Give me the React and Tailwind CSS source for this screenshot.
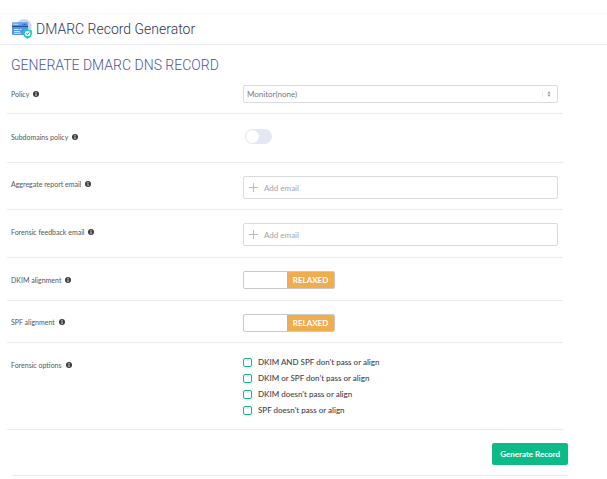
import { useState } from 'react';

const FORENSIC_OPTIONS = [
  { id: 'dkim-and-spf', label: "DKIM AND SPF don't pass or align" },
  { id: 'dkim-or-spf', label: "DKIM or SPF don't pass or align" },
  { id: 'dkim', label: "DKIM doesn't pass or align" },
  { id: 'spf', label: "SPF doesn't pass or align" },
];

const RecordIcon = () => (
  <svg className="w-5 h-5 shrink-0" viewBox="0 0 20 20" aria-hidden="true">
    <circle cx="12" cy="7.6" r="7.6" fill="#ccd5e8" />
    <rect x="0" y="3.6" width="16" height="12.4" rx="1" fill="#4f98f0" />
    <path d="M0 6.8V4.6a1 1 0 0 1 1-1h14a1 1 0 0 1 1 1v2.2z" fill="#62a5f5" />
    <rect x="0" y="6.8" width="16" height="1.2" fill="#234f91" />
    <path d="M1.5 5.3h5" stroke="#d8e9ff" strokeWidth=".8" />
    <path d="M10.5 5.3h4" stroke="#234f91" strokeWidth="1" strokeDasharray="1 .5" />
    <path d="M2 10.5h4.5M7.5 10.5h2M2 12.5h6M2 14.3h7" stroke="#e3efff" strokeWidth=".9" />
    <path d="M15.6 9.8c1.2 1 2.7 1.5 4.3 1.5v3.5c0 2.4-1.8 3.9-4.3 5-2.5-1.1-4.3-2.6-4.3-5v-3.5c1.6 0 3.1-.5 4.3-1.5z" fill="#0acdb8" />
    <circle cx="15.6" cy="14.5" r="2.8" fill="#fff" />
    <path d="M14.3 14.5l1 1 1.8-2" fill="none" stroke="#354460" strokeWidth=".9" />
  </svg>
);

const InfoIcon = () => (
  <svg className="w-1.5 h-1.5 shrink-0" viewBox="0 0 12 12" aria-hidden="true">
    <circle cx="6" cy="6" r="6" fill="#3c3c3c" />
    <path d="M5 2.2h2v1.6H5zM4.4 5H7v3.4h.7v1.2H4.4V8.4H5V6.2h-.6z" fill="#ddd" />
  </svg>
);

const Row = ({ label, htmlFor, className, labelClassName = 'pt-px', children }) => (
  <div className={`grid grid-cols-[232px_1fr] border-b border-[#e9eaf0] ${className}`}>
    <div className={`flex items-start px-1 ${labelClassName}`}>
      <div className="flex items-center gap-1">
        <label htmlFor={htmlFor} id={`${htmlFor}-label`} className="text-[7px] leading-4 text-[#555]">
          {label}
        </label>
        <InfoIcon />
      </div>
    </div>
    <div className="pl-1 pr-[5px]">{children}</div>
  </div>
);

const EmailInput = ({ id }) => (
  <div className="flex items-center gap-1.5 h-[23px] px-[5px] border border-[#d9dadd] rounded-xs">
    <svg className="w-[9px] h-[9px] shrink-0" viewBox="0 0 9 9" aria-hidden="true">
      <path d="M4.5 0v9M0 4.5h9" stroke="#bcbcbc" strokeWidth="1" />
    </svg>
    <input
      id={id}
      type="email"
      placeholder="Add email"
      className="w-full text-[8px] leading-4 text-[#555] placeholder:text-[#a5a5a5] outline-none"
    />
  </div>
);

const AlignmentSwitch = ({ id }) => {
  const [relaxed, setRelaxed] = useState(true);
  return (
    <button
      id={id}
      type="button"
      role="switch"
      aria-checked={relaxed}
      aria-labelledby={`${id}-label`}
      onClick={() => setRelaxed(!relaxed)}
      className={`flex w-[92px] h-[18px] border border-[#c9c9c9] rounded-xs overflow-hidden ${relaxed ? 'justify-end' : 'justify-start'}`}
    >
      <span className="w-[47px] h-4 bg-[#f0ad4e] text-white text-[8px] leading-4 font-bold text-center">
        {relaxed ? 'RELAXED' : 'STRICT'}
      </span>
    </button>
  );
};

const App = () => {
  return (
    <div className="bg-white font-[Lato,sans-serif] pt-[13px]">
      <header className="flex items-center gap-1 h-8 pl-3 border-t border-b border-t-[#f8f8fa] border-b-[#e9eaf0]">
        <RecordIcon />
        <h1 className="font-[Roboto,sans-serif] text-[14px] leading-5 font-light text-[#35354f]">DMARC Record Generator</h1>
      </header>

      <form onSubmit={(e) => e.preventDefault()}>
        <h2 className="pt-2.5 pl-[11px] font-[Roboto,sans-serif] text-[14px] leading-5 font-light text-[#4a5796]">
          GENERATE DMARC DNS RECORD
        </h2>

        <div className="ml-[7px] mr-11">
          <Row label="Policy" htmlFor="policy" className="pt-2.5 pb-2.5">
            <div className="relative flex items-center">
              <select
                id="policy"
                className="appearance-none w-full h-[18px] px-[3px] border border-[#d9dadd] rounded-xs bg-white text-[8px] leading-4 text-[#777]"
              >
                <option>Monitor(none)</option>
                <option>Quarantine</option>
                <option>Reject</option>
              </select>
              <svg className="absolute right-1.5 w-2.5 h-2 pointer-events-none" viewBox="0 0 10 8" aria-hidden="true">
                <path d="M.5 1v6" stroke="#eeeeee" />
                <path d="M5.5 3.5L7 1l1.5 2.5zM5.5 4.5L7 7l1.5-2.5z" fill="#999" />
              </svg>
            </div>
          </Row>

          <Row label="Subdomains policy" htmlFor="subdomains" className="pt-[15px] pb-[17px]" labelClassName="pt-0">
            <input
              id="subdomains"
              type="checkbox"
              role="switch"
              className="appearance-none block ml-0.5 w-[27px] h-[15px] p-px rounded-full bg-[#e4e8f1] checked:bg-[#0cbb87] before:block before:w-[13px] before:h-[13px] before:rounded-full before:bg-white checked:before:ml-3"
            />
          </Row>

          <Row label="Aggregate report email" htmlFor="aggregate" className="pt-[13px] pb-2.5" labelClassName="pt-0">
            <EmailInput id="aggregate" />
          </Row>

          <Row label="Forensic feedback email" htmlFor="forensic" className="pt-[13px] pb-[11px]">
            <EmailInput id="forensic" />
          </Row>

          <Row label="DKIM alignment" htmlFor="dkim-alignment" className="pt-[13px] pb-[11px]">
            <AlignmentSwitch id="dkim-alignment" />
          </Row>

          <Row label="SPF alignment" htmlFor="spf-alignment" className="pt-[13px] pb-2.5" labelClassName="pt-0">
            <AlignmentSwitch id="spf-alignment" />
          </Row>

          <Row label="Forensic options" htmlFor="dkim-and-spf" className="pt-[11px] pb-[11px]" labelClassName="pt-[3px]">
            {FORENSIC_OPTIONS.map((option) => (
              <label
                key={option.id}
                className="flex items-center gap-1.5 h-4 text-[8px] leading-4 font-medium text-[#3f4047]"
              >
                <input
                  id={option.id}
                  type="checkbox"
                  className="appearance-none w-[9px] h-[9px] border border-[#0cbb87] rounded-xs checked:bg-[#0cbb87]"
                />
                {option.label}
              </label>
            ))}
          </Row>
        </div>

        <div className="flex justify-end ml-3 mr-[39px] pt-[13px] pb-2.5 border-b border-[#e9eaf0]">
          <button
            type="submit"
            className="h-[22px] px-2 rounded-xs bg-[#0cbb87] text-white text-[8px] leading-4 font-bold"
          >
            Generate Record
          </button>
        </div>
      </form>
    </div>
  );
};

export default App;
